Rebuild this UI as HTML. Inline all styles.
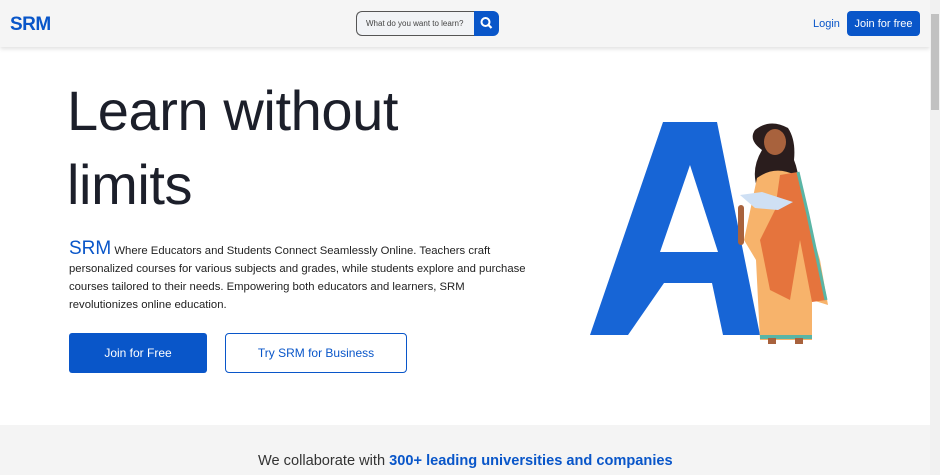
<!DOCTYPE html>
<html><head><meta charset="utf-8"><style>
*{margin:0;padding:0;box-sizing:border-box}
body{width:940px;height:475px;overflow:hidden;background:#fff;font-family:"Liberation Sans",sans-serif;position:relative}
.nav{position:absolute;left:0;top:0;width:930px;height:47px;background:#f5f5f5;box-shadow:0 2px 4px rgba(0,0,0,.12)}
.logo{position:absolute;left:10px;top:14px;font-weight:bold;font-size:19px;color:#0956c9;letter-spacing:-0.5px}
.search{position:absolute;left:356px;top:11px;width:119px;height:25px;border:1px solid #555;border-right:none;border-radius:6px 0 0 6px;background:#f1f3f6;font-size:8px;color:#444;padding:7px 0 0 9px}
.sbtn{position:absolute;left:474px;top:11px;width:25px;height:25px;background:#0956c9;border-radius:0 6px 6px 0}
.login{position:absolute;left:813px;top:18px;font-size:11px;color:#0956c9}
.join{position:absolute;left:847px;top:11px;width:73px;height:25px;background:#0956c9;border-radius:4px;color:#fff;font-size:11px;text-align:center;line-height:26px}
.scroll{position:absolute;left:930px;top:0;width:10px;height:475px;background:#f1f1f1}
.thumb{position:absolute;left:931px;top:14px;width:8px;height:96px;background:#c1c1c1}
h1{position:absolute;left:67px;top:74px;font-size:56px;font-weight:500;color:#1c1f2a;line-height:74px;letter-spacing:-0.4px}
.p{position:absolute;left:69px;top:240px;width:462px;font-size:11.3px;line-height:18px;color:#222}
.p b{font-weight:normal;color:#0956c9;font-size:19px}
.b1{position:absolute;left:69px;top:333px;width:138px;height:40px;background:#0956c9;border-radius:3px;color:#fff;font-size:12px;text-align:center;line-height:40px}
.b2{position:absolute;left:225px;top:333px;width:182px;height:40px;border:1.5px solid #0956c9;border-radius:4px;color:#0956c9;font-size:12px;text-align:center;line-height:39px}
.band{position:absolute;left:0;top:425px;width:930px;height:50px;background:#f4f4f4}
.band div{position:absolute;left:258px;top:28px;font-size:14.6px;color:#333}
.band b{color:#0956c9}
</style></head><body>
<div class="nav">
<div class="logo">SRM</div>
<div class="search">What do you want to learn?</div>
<div class="sbtn"><svg width="25" height="25"><circle cx="11.5" cy="11" r="4" fill="none" stroke="#fff" stroke-width="2"/><line x1="14.5" y1="14" x2="17.5" y2="17" stroke="#fff" stroke-width="2.2"/></svg></div>
<div class="login">Login</div>
<div class="join">Join for free</div>
</div>
<div class="scroll"></div><div class="thumb"></div>
<h1>Learn without<br>limits</h1>
<div class="p"><b>SRM</b> Where Educators and Students Connect Seamlessly Online. Teachers craft personalized courses for various subjects and grades, while students explore and purchase courses tailored to their needs. Empowering both educators and learners, SRM revolutionizes online education.</div>
<div class="b1">Join for Free</div>
<div class="b2">Try SRM for Business</div>
<svg style="position:absolute;left:0;top:0" width="930" height="420">
<path d="M663 122 L717 122 L760 335 L723 335 L712 283 L664 283 L628 335 L590 335 Z" fill="#1765d6"/>
<path d="M690 165 L718 252 L660 252 Z" fill="#fff"/>
<path d="M762 150 Q748 140 755 130 Q770 118 788 128 Q796 140 794 160 Q800 175 798 190 L758 190 Q750 170 762 150Z" fill="#2a1d1d"/>
<ellipse cx="775" cy="142" rx="11" ry="13" fill="#a8623d"/>
<path d="M757 178 Q775 165 795 175 L805 210 L820 260 L828 305 L812 300 L812 340 L760 340 L756 260 L744 240 Z" fill="#f7b36b"/>
<path d="M780 175 L798 172 L808 215 L826 300 L812 302 L800 240 L790 300 L770 290 L760 240 L775 210 Z" fill="#e5743d"/>
<path d="M798 172 L808 215 L826 300" fill="none" stroke="#5ab5a5" stroke-width="3"/>
<path d="M760 337 L812 337" stroke="#5ab5a5" stroke-width="4"/>
<path d="M740 195 L762 192 L793 202 L778 210 L755 208 Z" fill="#cfe0f4"/>
<rect x="738" y="205" width="6" height="40" rx="3" fill="#a8623d"/>
<rect x="768" y="338" width="8" height="6" fill="#a8623d"/><rect x="795" y="338" width="8" height="6" fill="#a8623d"/>
</svg>
<div class="band"><div>We collaborate with <b>300+ leading universities and companies</b></div></div>
</body></html>
